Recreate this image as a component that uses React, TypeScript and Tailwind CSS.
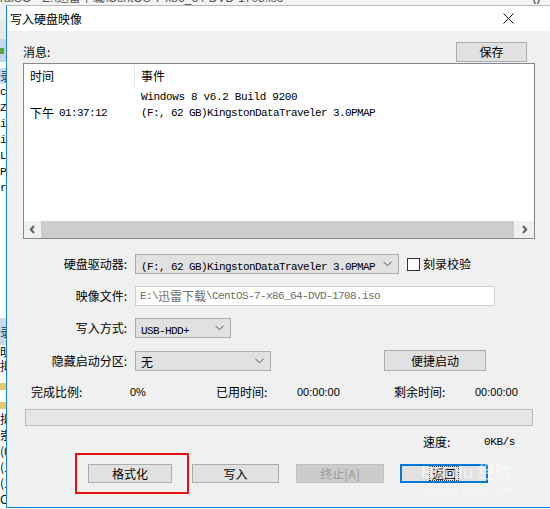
import React from 'react';

const cjk = "font-['Microsoft_YaHei','Noto_Sans_CJK_SC',sans-serif]";
const mono = "font-['Liberation_Mono','Noto_Sans_CJK_SC',monospace]";
const ui = "font-['Liberation_Sans','Noto_Sans_CJK_SC',sans-serif]";

const Chevron: React.FC = () => (
  <svg width="9" height="6" viewBox="0 0 9 6" className="shrink-0">
    <path d="M0.5 0.8 L4.5 4.8 L8.5 0.8" fill="none" stroke="#505050" strokeWidth="1" />
  </svg>
);

const Select: React.FC<{ width: string; children: React.ReactNode; className?: string }> = ({
  width,
  children,
  className = '',
}) => (
  <div
    className={`${width} h-[20px] bg-[#e1e1e1] border border-[#adadad] flex items-center pl-[5px] pr-[6px] ${className}`}
  >
    <div className="flex-1 whitespace-nowrap overflow-hidden">{children}</div>
    <Chevron />
  </div>
);

const Button: React.FC<{ width: string; children: React.ReactNode; className?: string }> = ({
  width,
  children,
  className = '',
}) => (
  <div
    className={`${width} h-[19px] bg-[#e1e1e1] border border-[#adadad] flex items-center justify-center text-[12px] text-black ${cjk} ${className}`}
  >
    {children}
  </div>
);

const Label: React.FC<{ children: React.ReactNode }> = ({ children }) => (
  <div className={`w-[104px] text-right text-[12px] text-black shrink-0 ${cjk}`}>{children}</div>
);

const backLines = ['c0', 'ZI', 'ir', 'is', 'Li', 'P:', 'r'];
const backLines2 = ['(0', '(1', '(1', 'C]'];

export default function App() {
  return (
    <div className="relative w-[550px] h-[509px] overflow-hidden bg-white">
      {/* window behind */}
      <div className="flex flex-col w-full h-full">
        <div className="h-[5px] overflow-hidden bg-[#f4f4f4] flex justify-between">
          <div className={`-mt-[10px] leading-[16px] text-[12px] text-[#555] whitespace-nowrap ${ui}`}>
            raISO - E:\迅雷下载\CentOS-7-x86_64-DVD-1708.iso
          </div>
          <div className="-mt-[10px] mr-[10px] leading-[16px] text-[12px] text-[#333]">()</div>
        </div>
        <div className="h-[15px] bg-[#f0f0f0]" />
        <div className="h-[20px] bg-[#e9e9e9] border-b border-[#d4d4d4]" />
        <div className="h-[22px] bg-[#c6d5ea] flex items-center">
          <div className="w-[4px] h-[6px] bg-[#5aa03c]" />
        </div>
        <div className="h-[6px]" />
        <div className={`h-[16px] bg-[#c9dcf3] text-[12px] leading-[16px] text-[#234] ${cjk}`}>录</div>
        <div className={`flex flex-col text-[11px] leading-[16px] text-black ${mono}`}>
          {backLines.map((l, i) => (
            <div key={i} className="whitespace-nowrap">{l}</div>
          ))}
        </div>
        <div className="h-[122px]" />
        <div className={`h-[27px] bg-[#c9d7ea] text-[12px] leading-[27px] text-[#234] ${cjk}`}>录</div>
        <div className={`flex flex-col text-[12px] leading-[14px] text-black ${cjk}`}>
          <div>明</div>
          <div>拟</div>
        </div>
        <div className="h-[8px]" />
        <div className="h-[7px] w-[6px] bg-[#e5c86b] mt-[2px]" />
        <div className="h-[7px] w-[6px] bg-[#e5c86b] mt-[12px]" />
        <div className={`flex flex-col mt-[2px] text-[12px] leading-[16px] text-black ${cjk}`}>
          <div>拟</div>
          <div>崇</div>
          {backLines2.map((l, i) => (
            <div key={i}>{l}</div>
          ))}
        </div>
      </div>

      {/* dialog */}
      <div className="absolute left-[6px] top-[5px] w-[544px] h-[503px] border-l border-b border-t border-[#1883d7] border-t-[#b9b9b9] flex flex-col bg-[#f0f0f0]">
        <div className="h-[25px] bg-white flex items-center shrink-0">
          <div className={`pl-[3px] text-[12px] text-black ${cjk}`}>写入硬盘映像</div>
          <div className="ml-auto mr-[19px] w-[46px] h-[25px] flex items-center justify-center">
            <svg width="11" height="11" viewBox="0 0 11 11">
              <path d="M0.5 0.5 L10.5 10.5 M10.5 0.5 L0.5 10.5" stroke="#111" strokeWidth="1" />
            </svg>
          </div>
        </div>

        <div className="flex-1 pl-[16px] flex flex-col">
          {/* messages header */}
          <div className="mt-[11px] w-[512px] h-[20px] flex items-center justify-between">
            <div className={`text-[12px] text-black ${cjk}`}>消息:</div>
            <Button width="w-[71px]" className="h-[20px] mr-[8px]">
              保存
            </Button>
          </div>

          {/* message list */}
          <div className="mt-[1px] w-[512px] h-[176px] border border-[#828790] bg-white flex flex-col">
            <div className={`h-[24px] flex items-center text-[12px] text-black ${cjk}`}>
              <div className="w-[110px] pl-[6px]">时间</div>
              <div className="w-px h-[22px] bg-[#e5e5e5]" />
              <div className="pl-[6px]">事件</div>
            </div>
            <div className="pt-[1px] flex flex-col text-black">
              <div className="h-[16px] flex items-center">
                <div className="w-[111px]" />
                <div className={`pl-[6px] text-[11px] tracking-[-0.35px] whitespace-nowrap ${mono}`}>
                  Windows 8 v6.2 Build 9200
                </div>
              </div>
              <div className="h-[16px] flex items-center">
                <div className="w-[111px] pl-[6px] flex items-center whitespace-nowrap">
                  <span className={`text-[12px] ${cjk}`}>下午</span>
                  <span className={`ml-[5px] text-[11px] tracking-[-0.6px] ${mono}`}>01:37:12</span>
                </div>
                <div className={`pl-[6px] text-[11px] tracking-[-0.6px] whitespace-nowrap ${mono}`}>
                  (F:, 62 GB)KingstonDataTraveler 3.0PMAP
                </div>
              </div>
            </div>
            <div className="flex-1" />
            <div className="h-[17px] flex bg-[#cdcdcd]">
              <div className="w-[17px] h-[17px] bg-[#f0f0f0] flex items-center justify-center">
                <svg width="7" height="9" viewBox="0 0 7 9">
                  <path d="M5 1 L1.8 4.5 L5 8" fill="none" stroke="#606060" strokeWidth="2" />
                </svg>
              </div>
              <div className="flex-1" />
              <div className="w-[20px] h-[17px] bg-[#f0f0f0] flex items-center justify-center">
                <svg width="7" height="9" viewBox="0 0 7 9">
                  <path d="M2 1 L5.2 4.5 L2 8" fill="none" stroke="#606060" strokeWidth="2" />
                </svg>
              </div>
            </div>
          </div>

          {/* drive */}
          <div className="mt-[15px] h-[20px] flex items-center">
            <Label>硬盘驱动器:</Label>
            <Select width="w-[264px]" className="ml-[8px]">
              <span className={`text-[11px] tracking-[-0.6px] text-black ${mono}`}>
                (F:, 62 GB)KingstonDataTraveler 3.0PMAP
              </span>
            </Select>
            <div className="ml-[8px] w-[13px] h-[13px] border border-[#333] bg-white" />
            <div className={`ml-[3px] text-[12px] text-black ${cjk}`}>刻录校验</div>
          </div>

          {/* image file */}
          <div className="mt-[12px] h-[20px] flex items-center">
            <Label>映像文件:</Label>
            <div className="ml-[8px] w-[360px] h-[20px] bg-white border border-[#d0d0d0] flex items-center pl-[4px] whitespace-nowrap overflow-hidden">
              <span className={`text-[11px] tracking-[-0.6px] text-[#6d6d6d] ${mono}`}>E:\</span>
              <span className={`text-[12px] text-[#6d6d6d] ${cjk}`}>迅雷下载</span>
              <span className={`text-[11px] tracking-[-0.6px] text-[#6d6d6d] ${mono}`}>
                \CentOS-7-x86_64-DVD-1708.iso
              </span>
            </div>
          </div>

          {/* write method */}
          <div className="mt-[12px] h-[20px] flex items-center">
            <Label>写入方式:</Label>
            <Select width="w-[96px]" className="ml-[8px]">
              <span className={`text-[11px] tracking-[-0.6px] text-black ${mono}`}>USB-HDD+</span>
            </Select>
          </div>

          {/* hidden partition */}
          <div className="mt-[12px] h-[21px] flex items-center">
            <Label>隐藏启动分区:</Label>
            <Select width="w-[136px]" className="ml-[8px]">
              <span className={`text-[12px] text-black ${cjk}`}>无</span>
            </Select>
            <Button width="w-[102px]" className="ml-[113px] h-[21px]">
              便捷启动
            </Button>
          </div>

          {/* stats */}
          <div className="mt-[13px] h-[16px] pl-[8px] flex items-center text-[12px] text-black whitespace-nowrap">
            <div className={`w-[99px] ${cjk}`}>完成比例:</div>
            <div className={`w-[86px] text-[11px] ${ui}`}>0%</div>
            <div className={`w-[81px] ${cjk}`}>已用时间:</div>
            <div className={`w-[97px] text-[11px] ${ui}`}>00:00:00</div>
            <div className={`w-[81px] ${cjk}`}>剩余时间:</div>
            <div className={`text-[11px] ${ui}`}>00:00:00</div>
          </div>

          <div className="mt-[9px] ml-[2px] w-[508px] h-[17px] bg-[#e6e6e6] border border-[#bcbcbc]" />

          <div className="mt-[8px] h-[16px] pl-[400px] flex items-center whitespace-nowrap">
            <div className={`w-[61px] text-[12px] text-black ${cjk}`}>速度:</div>
            <div className={`text-[11px] tracking-[-0.4px] text-black ${mono}`}>0KB/s</div>
          </div>

          {/* buttons */}
          <div className="mt-[14px] pl-[65px] flex items-center">
            <Button width="w-[84px]">格式化</Button>
            <Button width="w-[87px]" className="ml-[20px]">
              写入
            </Button>
            <div
              className={`ml-[17px] w-[88px] h-[19px] bg-[#cccccc] border border-[#bfbfbf] flex items-center justify-center text-[12px] text-[#9a9a9a] ${cjk}`}
            >
              终止[A]
            </div>
            <div className="ml-[16px] w-[88px] h-[19px] bg-[#e1e1e1] border-2 border-[#0078d7] flex items-center justify-center">
              <span className={`px-[2px] border border-dotted border-[#333] leading-[13px] text-[12px] text-black ${cjk}`}>
                返回
              </span>
            </div>
          </div>
        </div>
      </div>

      {/* annotation */}
      <div className="absolute left-[75px] top-[453px] w-[114px] h-[41px] border-2 border-[#ee1111]" />
      <div
        className={`absolute left-[421px] top-[463px] text-[17px] leading-[20px] font-bold text-white/50 whitespace-nowrap ${ui}`}
      >
        Bai du 经验
      </div>
      <div className={`absolute left-[424px] top-[484px] text-[11px] leading-[13px] text-white/50 ${ui}`}>
        jingyan.baidu.com
      </div>
    </div>
  );
}
